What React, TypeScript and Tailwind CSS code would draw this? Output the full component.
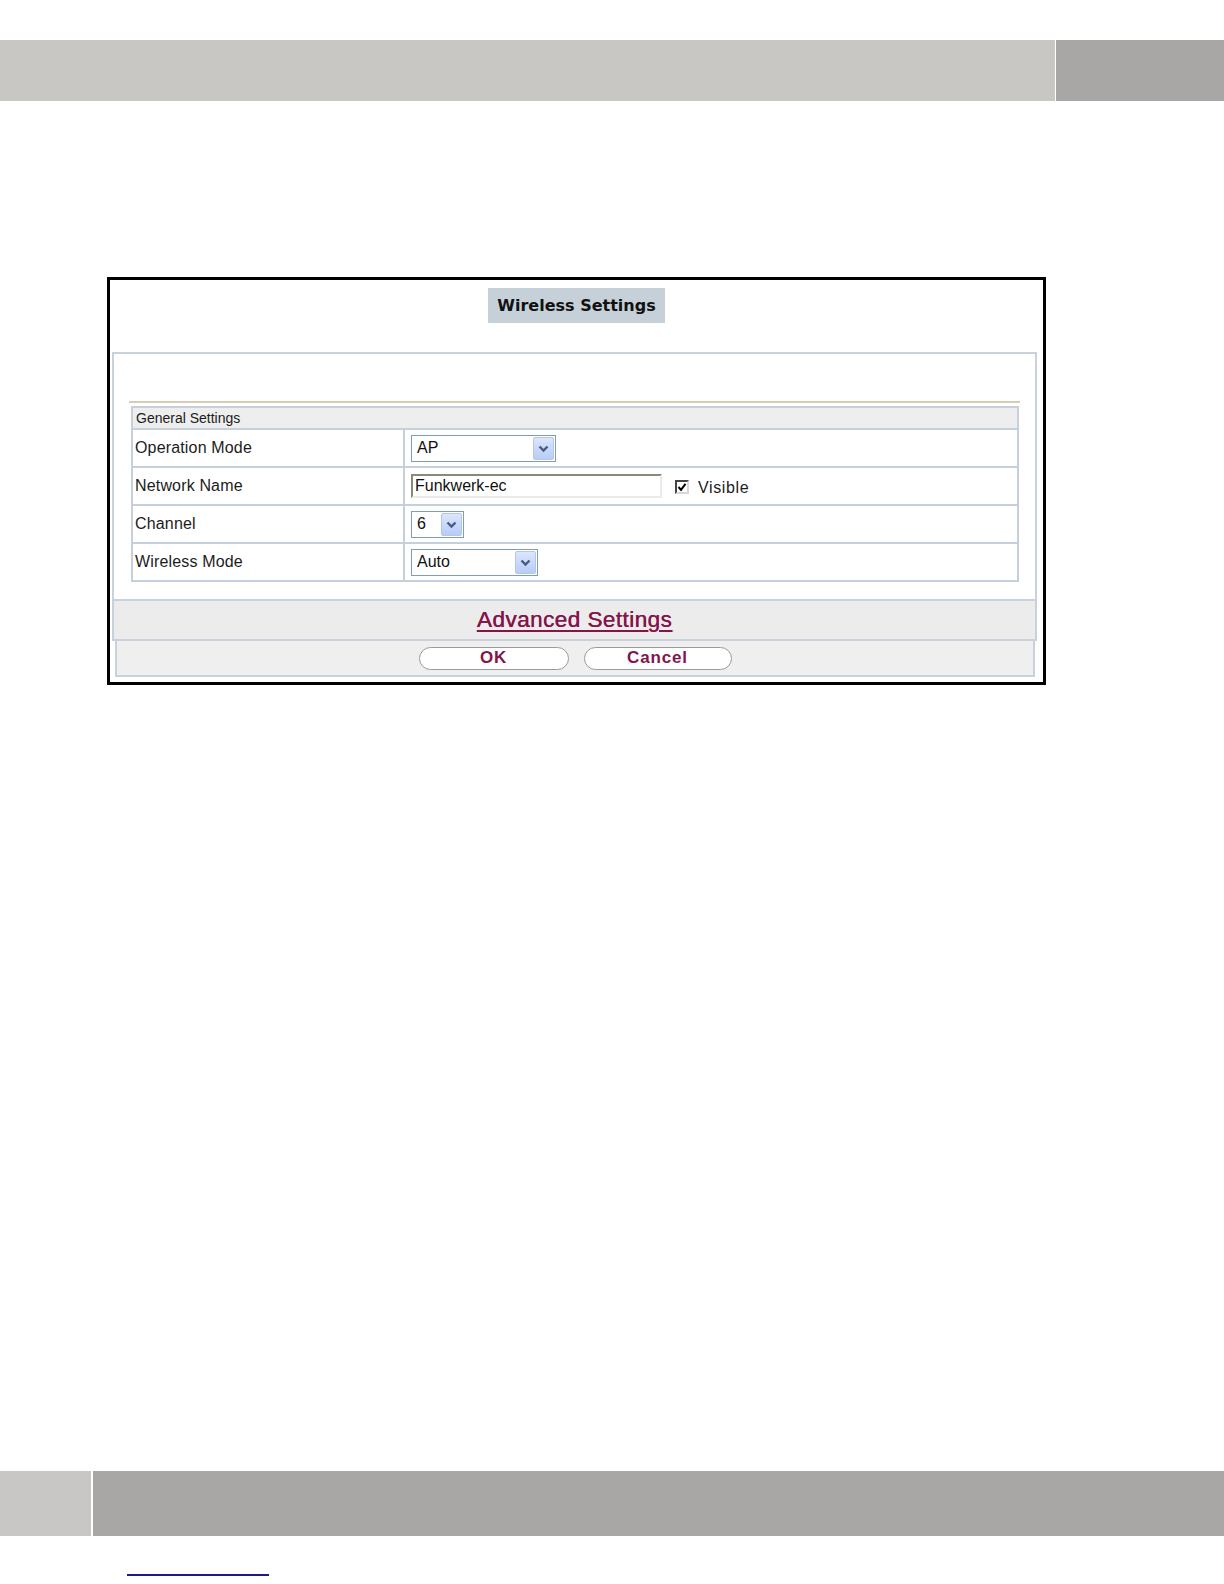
import { ReactNode } from 'react';

const sans = { fontFamily: '"Liberation Sans", Arial, sans-serif' };

function Chevron() {
  return (
    <svg width="11" height="9" viewBox="0 0 11 9">
      <path d="M1.5 2.5 L5.5 6.5 L9.5 2.5" fill="none" stroke="#475c84" strokeWidth="2.4" />
    </svg>
  );
}

function Select({ value, width }: { value: string; width: string }) {
  return (
    <div className={`flex h-[27px] items-stretch border border-[#7f9db9] bg-white p-px ${width}`}>
      <span className="flex flex-1 items-center pl-[4px] text-[16px] text-[#111]">{value}</span>
      <span className="flex w-[21px] items-center justify-center rounded-[2px] border border-[#b3c6ee] bg-gradient-to-b from-[#dce6fd] to-[#b8ccf6]">
        <Chevron />
      </span>
    </div>
  );
}

function Row({ label, children }: { label: string; children: ReactNode }) {
  return (
    <>
      <div className="flex h-[36px] items-center bg-white pl-[2px] text-[16px] tracking-[0.01em] text-[#1c1c1c]">{label}</div>
      <div className="flex h-[36px] items-center bg-white pl-[6px]">{children}</div>
    </>
  );
}

export default function App() {
  return (
    <div className="flex h-[1584px] w-[1224px] flex-col bg-white" style={sans}>
      {/* header strip */}
      <div className="mt-[40px] flex h-[61px]">
        <div className="w-[1055px] bg-[#c8c7c4]" />
        <div className="w-px bg-white" />
        <div className="flex-1 bg-[#a8a7a5]" />
      </div>

      {/* dialog */}
      <div className="ml-[107px] mt-[176px] flex w-[939px] flex-col border-[3px] border-black bg-white pb-[5px]">
        <div className="mt-[8px] flex justify-center">
          <div
            className="flex h-[35px] w-[177px] items-center justify-center bg-[#c5d0d9] text-[16px] font-bold text-[#111]"
            style={{ fontFamily: '"DejaVu Sans", Verdana, sans-serif' }}
          >
            Wireless Settings
          </div>
        </div>

        <div className="ml-[2px] mr-[6px] mt-[29px] border-2 border-[#c9d1dd]">
          <div className="bg-white px-[15px] pb-[17px] pt-[47px]">
            <div className="h-[2px] bg-[#d9cbb5]" />
            <div className="ml-[2px] mr-px mt-[3px] grid grid-cols-[270px_1fr] gap-[2px] bg-[#c6cfdc] p-[2px]">
              <div className="col-span-2 flex h-[20px] items-center bg-[#eeeeee] pl-[3px] text-[14px] text-[#1c1c1c]">
                General Settings
              </div>
              <Row label="Operation Mode">
                <Select value="AP" width="w-[145px]" />
              </Row>
              <Row label="Network Name">
                <div className="flex h-[24px] w-[251px] items-center border-2 border-b-[#ecece6] border-l-[#8a8a7c] border-r-[#ecece6] border-t-[#8a8a7c] bg-white pl-[2px] text-[16px] text-[#111]">
                  Funkwerk-ec
                </div>
                <div className="ml-[13px] mt-[2px] flex h-[14px] w-[14px] items-center justify-center border-2 border-b-[#d8d8d8] border-l-[#444] border-r-[#d8d8d8] border-t-[#444] bg-white">
                  <svg width="10" height="10" viewBox="0 0 10 10">
                    <path d="M1.5 5 L4 7.8 L8.5 1.8" fill="none" stroke="#000" strokeWidth="2" />
                  </svg>
                </div>
                <span className="ml-[9px] mt-[4px] text-[16px] tracking-[0.04em] text-[#1c1c1c]">Visible</span>
              </Row>
              <Row label="Channel">
                <Select value="6" width="w-[53px]" />
              </Row>
              <Row label="Wireless Mode">
                <Select value="Auto" width="w-[127px]" />
              </Row>
            </div>
          </div>
          <div className="flex h-[40px] items-center justify-center border-t-2 border-[#c9d1dd] bg-[#ececec]">
            <a
              className="text-[22.5px] tracking-[0.02em] text-[#85144b] underline decoration-[2px] underline-offset-[3px] [text-shadow:0.4px_0_0_#85144b]"
              href="#"
            >
              Advanced Settings
            </a>
          </div>
        </div>

        <div className="ml-[5px] mr-[8px] flex h-[36px] items-center justify-center gap-[15px] border-2 border-t-0 border-[#c9d1dd] bg-[#efefef]">
          <button className="flex h-[23px] w-[150px] items-center justify-center rounded-full border border-[#9a9a9a] bg-white text-[17px] font-bold tracking-[0.05em] text-[#85144b]">
            OK
          </button>
          <button className="flex h-[23px] w-[148px] items-center justify-center rounded-full border border-[#9a9a9a] bg-white text-[17px] font-bold tracking-[0.05em] text-[#85144b]">
            Cancel
          </button>
        </div>
      </div>

      {/* footer strip */}
      <div className="mt-auto flex h-[65px]">
        <div className="w-[91px] bg-[#c8c7c5]" />
        <div className="w-[2px] bg-white" />
        <div className="flex-1 bg-[#a8a7a5]" />
      </div>
      <div className="mb-[8px] ml-[127px] mt-[38px] h-[2px] w-[142px] bg-[#1a1a8c]" />
    </div>
  );
}
